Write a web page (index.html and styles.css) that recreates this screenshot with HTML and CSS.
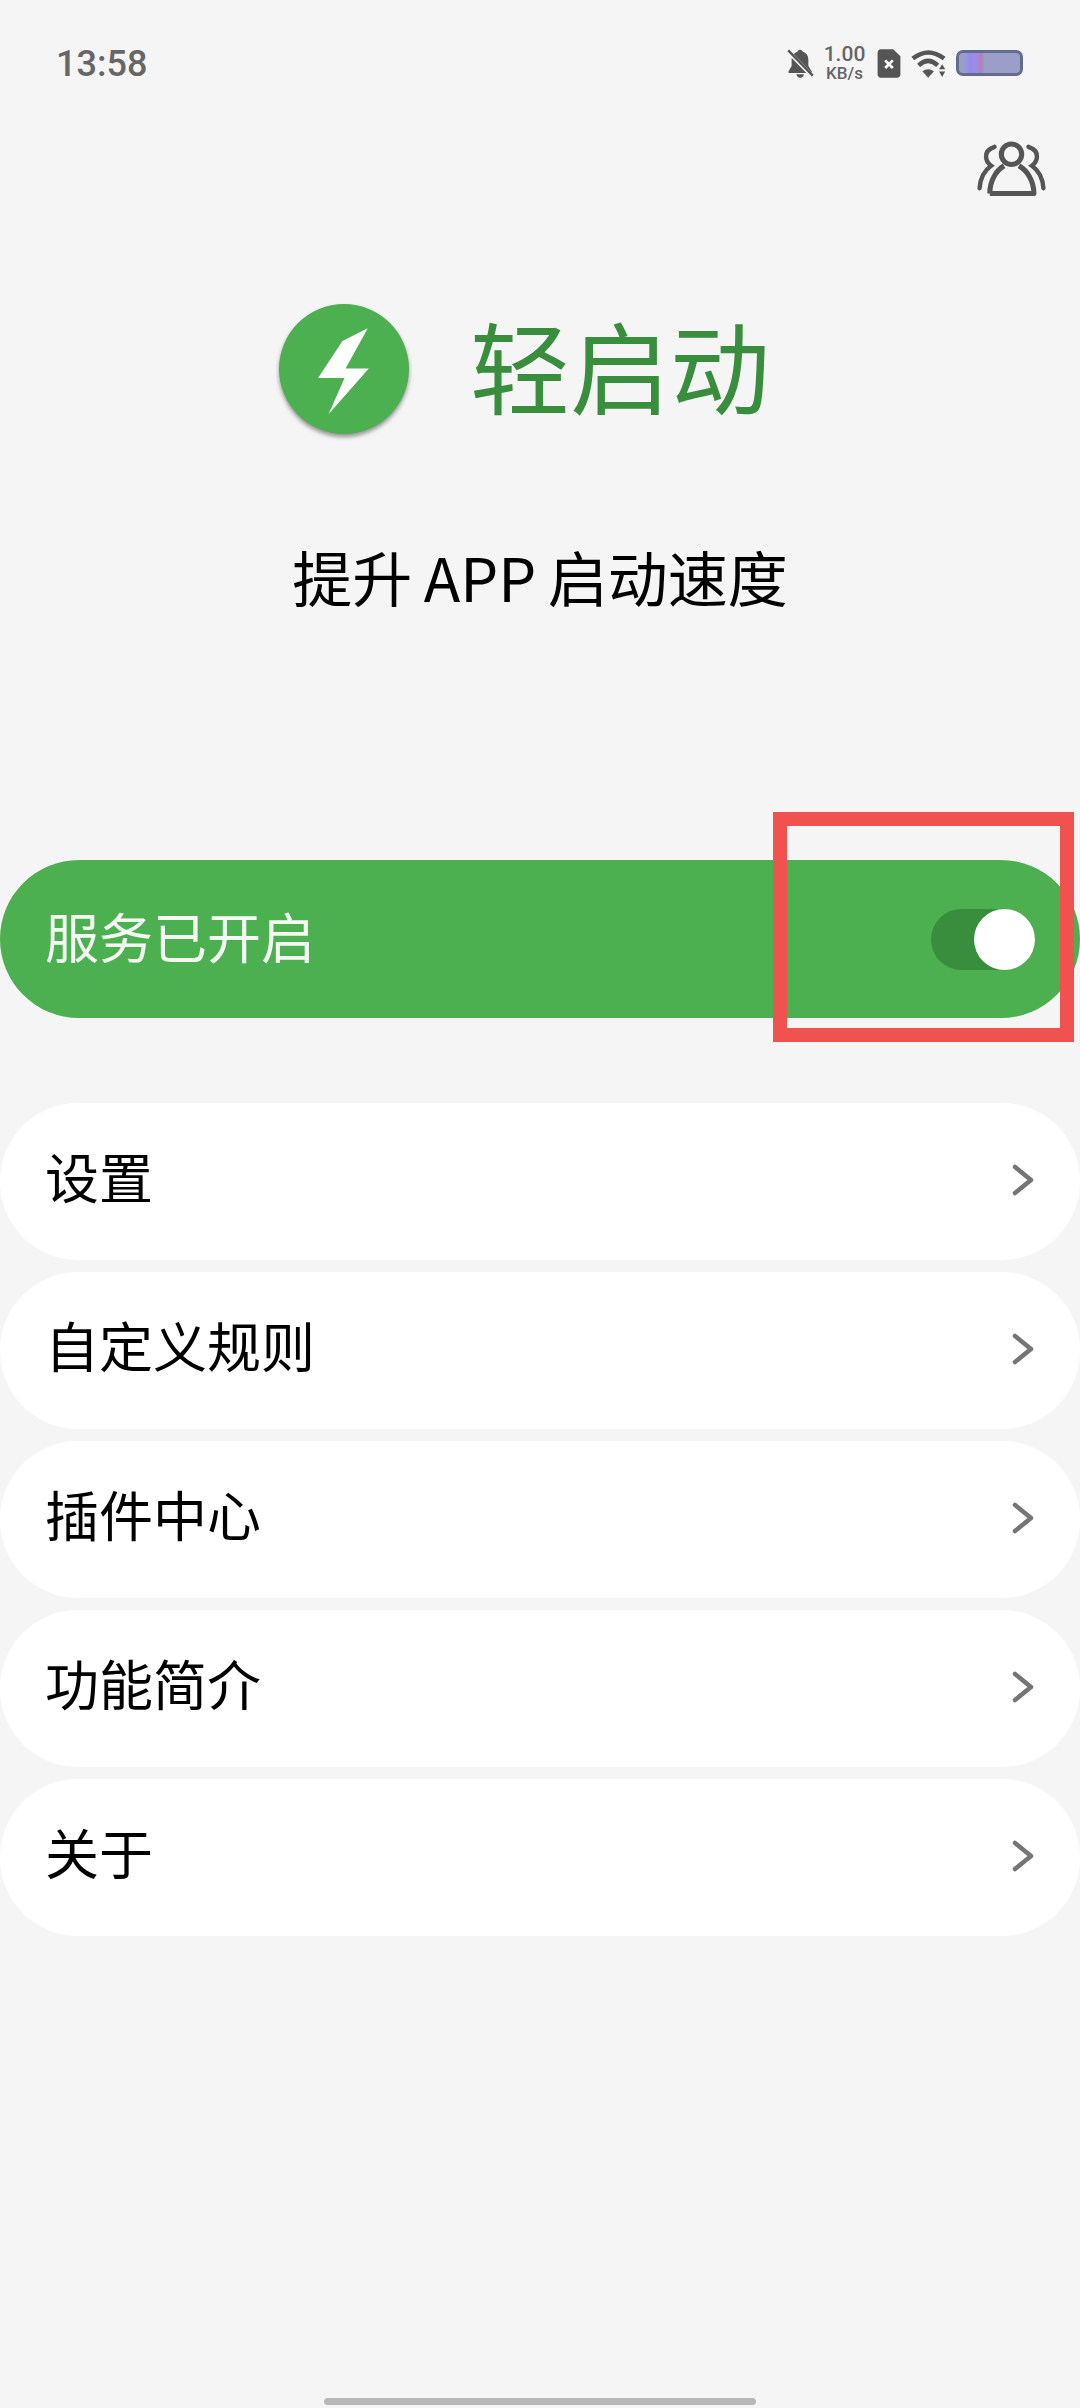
FILE: index.html
```html
<!DOCTYPE html>
<html>
<head>
	<title>轻启动</title>
	<link rel="stylesheet" href="styles.css">
</head>
<body>
	<div class="status">
		<span class="time">13:58</span>
		<div class="status-icons">
			<svg class="bell" viewBox="0 0 78 85">
				<path d="M38 2c4 0 7 3 8 6 11 3 16 12 16 24v18l10 15v5H4v-5l9-15V32C13 20 20 11 30 8c1-3 4-6 8-6zM27 74h22c-1 6-5 10-11 10s-10-4-11-10z" fill="#555"/>
				<path d="M4 8 76 82" stroke="#f5f5f5" stroke-width="12"/>
				<path d="M3 4 75 78" stroke="#555" stroke-width="7"/>
			</svg>
			<div class="speed">
				<span class="speed-num">1.00</span>
				<span class="speed-unit">KB/s</span>
			</div>
			<svg class="sim" viewBox="0 0 68 84">
				<path d="M10 1h36l21 20v52c0 6-4 10-10 10H10C5 83 1 79 1 73V11C1 5 5 1 10 1z" fill="#555"/>
				<path d="M23 33 45 55M45 33 23 55" stroke="#fff" stroke-width="8"/>
			</svg>
			<svg class="wifi" viewBox="0 0 105 85">
				<path d="M5 28Q50-8 97 28" fill="none" stroke="#555" stroke-width="13"/>
				<path d="M22 48Q50 22 78 48" fill="none" stroke="#555" stroke-width="13"/>
				<path d="M33 65Q50 53 67 65L50 84z" fill="#555"/>
				<path d="M91 45 100 59H82zM82 66H100L91 82z" fill="#555"/>
			</svg>
			<div class="battery"></div>
		</div>
	</div>

	<div class="top-action">
		<svg class="people" viewBox="0 0 200 165">
			<circle cx="100" cy="42" r="30" fill="none" stroke="#555" stroke-width="15"/>
			<path d="M36 158H166C166 120 146 90 122 76M36 158C36 120 55 90 78 76" fill="none" stroke="#555" stroke-width="15" stroke-linejoin="round"/>
			<path d="M50 20C32 26 24 38 25 50 26 62 32 70 40 76 20 90 8 112 6 142" fill="none" stroke="#555" stroke-width="13" stroke-linecap="round"/>
			<path d="M150 20C168 26 176 38 175 50 174 62 168 70 160 76 180 90 192 112 194 142" fill="none" stroke="#555" stroke-width="13" stroke-linecap="round"/>
		</svg>
	</div>

	<div class="brand">
		<div class="logo">
			<svg class="bolt" viewBox="0 0 123 123">
				<path d="M84 23 60 35 37 70H62L47 104 85 61H63z" fill="#fff"/>
			</svg>
		</div>
		<h1 class="title">轻启动</h1>
	</div>

	<p class="subtitle">提升 APP 启动速度</p>

	<div class="service">
		<span>服务已开启</span>
		<div class="toggle"><div class="thumb"></div></div>
		<div class="mark"></div>
	</div>

	<ul class="menu">
		<li class="row">设置<svg class="chevron" viewBox="0 0 22 32"><path d="M3 3 19 16 3 29"/></svg></li>
		<li class="row">自定义规则<svg class="chevron" viewBox="0 0 22 32"><path d="M3 3 19 16 3 29"/></svg></li>
		<li class="row">插件中心<svg class="chevron" viewBox="0 0 22 32"><path d="M3 3 19 16 3 29"/></svg></li>
		<li class="row">功能简介<svg class="chevron" viewBox="0 0 22 32"><path d="M3 3 19 16 3 29"/></svg></li>
		<li class="row">关于<svg class="chevron" viewBox="0 0 22 32"><path d="M3 3 19 16 3 29"/></svg></li>
	</ul>

	<div class="home-bar"></div>
</body>
</html>
```

FILE: styles.css
```css
/* Page */
body {
  margin: 0;
  height: 2408px;
  overflow: hidden;
  display: flex;
  flex-direction: column;
  background-color: #f5f5f5;
  font-family: "Noto Sans CJK SC", "Noto Sans", sans-serif;
  color: #000;
}

/* Status bar */
.status {
  height: 126px;
  flex-shrink: 0;
  display: flex;
  align-items: center;
  justify-content: space-between;
  padding: 0 57px 0 56px;
  box-sizing: border-box;
}

.time {
  margin-top: 2px;
  font-family: Roboto, sans-serif;
  font-weight: 500;
  font-size: 36px;
  color: #666;
}

.status-icons {
  display: flex;
  align-items: center;
}

.bell {
  width: 27px;
  height: 29px;
}

.speed {
  display: flex;
  flex-direction: column;
  align-items: center;
  width: 43px;
  margin-left: 9px;
  font-family: Roboto, sans-serif;
  font-weight: 500;
  color: #666;
}

.speed-num {
  font-size: 21px;
  line-height: 21px;
}

.speed-unit {
  font-size: 17px;
  line-height: 17px;
}

.sim {
  width: 24px;
  height: 29px;
  margin-left: 11px;
}

.wifi {
  width: 36px;
  height: 29px;
  margin-left: 10px;
}

.battery {
  width: 67px;
  height: 26px;
  margin-left: 9px;
  box-sizing: border-box;
  border: 3px solid #626c8c;
  border-radius: 7px;
  background: linear-gradient(90deg, #9a9ec8 0, #9a9ec8 8%, #8f8cf0 18%, #a08ce0 28%, #b07fc0 36%, #9a9ec8 42%, #9a9ec8 100%);
}

/* Top right action */
.top-action {
  display: flex;
  justify-content: flex-end;
  padding: 14px 34px 0 0;
}

.people {
  width: 69px;
  height: 56px;
}

/* Logo and name */
.brand {
  display: flex;
  align-items: flex-start;
  padding-left: 279px;
  margin-top: 108px;
}

.logo {
  width: 130px;
  height: 130px;
  border-radius: 50%;
  background-color: #4caf50;
  box-shadow: 0 3px 4px rgba(0, 0, 0, 0.4);
}

.bolt {
  display: block;
  width: 130px;
  height: 130px;
}

.title {
  margin: 0 0 0 61px;
  font-size: 100px;
  line-height: 120px;
  font-weight: 400;
  color: #388e3c;
}

.subtitle {
  margin: 102px 0 0;
  text-align: center;
  font-size: 60px;
  line-height: 80px;
  word-spacing: -2px;
}

/* Service switch */
.service {
  position: relative;
  height: 158px;
  flex-shrink: 0;
  margin-top: 244px;
  padding: 0 45px 0 45px;
  box-sizing: border-box;
  display: flex;
  align-items: center;
  justify-content: space-between;
  border-radius: 79px;
  background-color: #4caf50;
  color: #f4f9f4;
  font-size: 54px;
}

.service span {
  margin-bottom: 7px;
}

.toggle {
  display: flex;
  justify-content: flex-end;
  width: 104px;
  height: 61px;
  border-radius: 31px;
  background-color: #388e3c;
}

.thumb {
  width: 61px;
  height: 61px;
  border-radius: 50%;
  background-color: #fff;
}

/* Red annotation box drawn over the bar */
.mark {
  position: absolute;
  top: -48px;
  left: 773px;
  width: 301px;
  height: 230px;
  box-sizing: border-box;
  border: 14px solid #f0524f;
}

/* Menu */
.menu {
  list-style: none;
  margin: 85px 0 0;
  padding: 0;
  display: flex;
  flex-direction: column;
  gap: 12px;
}

.row {
  height: 157px;
  padding: 0 46px 12px 45px;
  box-sizing: border-box;
  display: flex;
  align-items: center;
  justify-content: space-between;
  border-radius: 78px;
  background-color: #fff;
  font-size: 54px;
}

.chevron {
  width: 22px;
  height: 32px;
  margin-top: 9px;
  fill: none;
  stroke: #757575;
  stroke-width: 4.5;
  stroke-linecap: round;
  stroke-linejoin: round;
}

/* Gesture bar */
.home-bar {
  width: 432px;
  height: 7px;
  flex-shrink: 0;
  margin: auto auto 3px;
  border-radius: 4px;
  background-color: #b8b8b8;
}
```
